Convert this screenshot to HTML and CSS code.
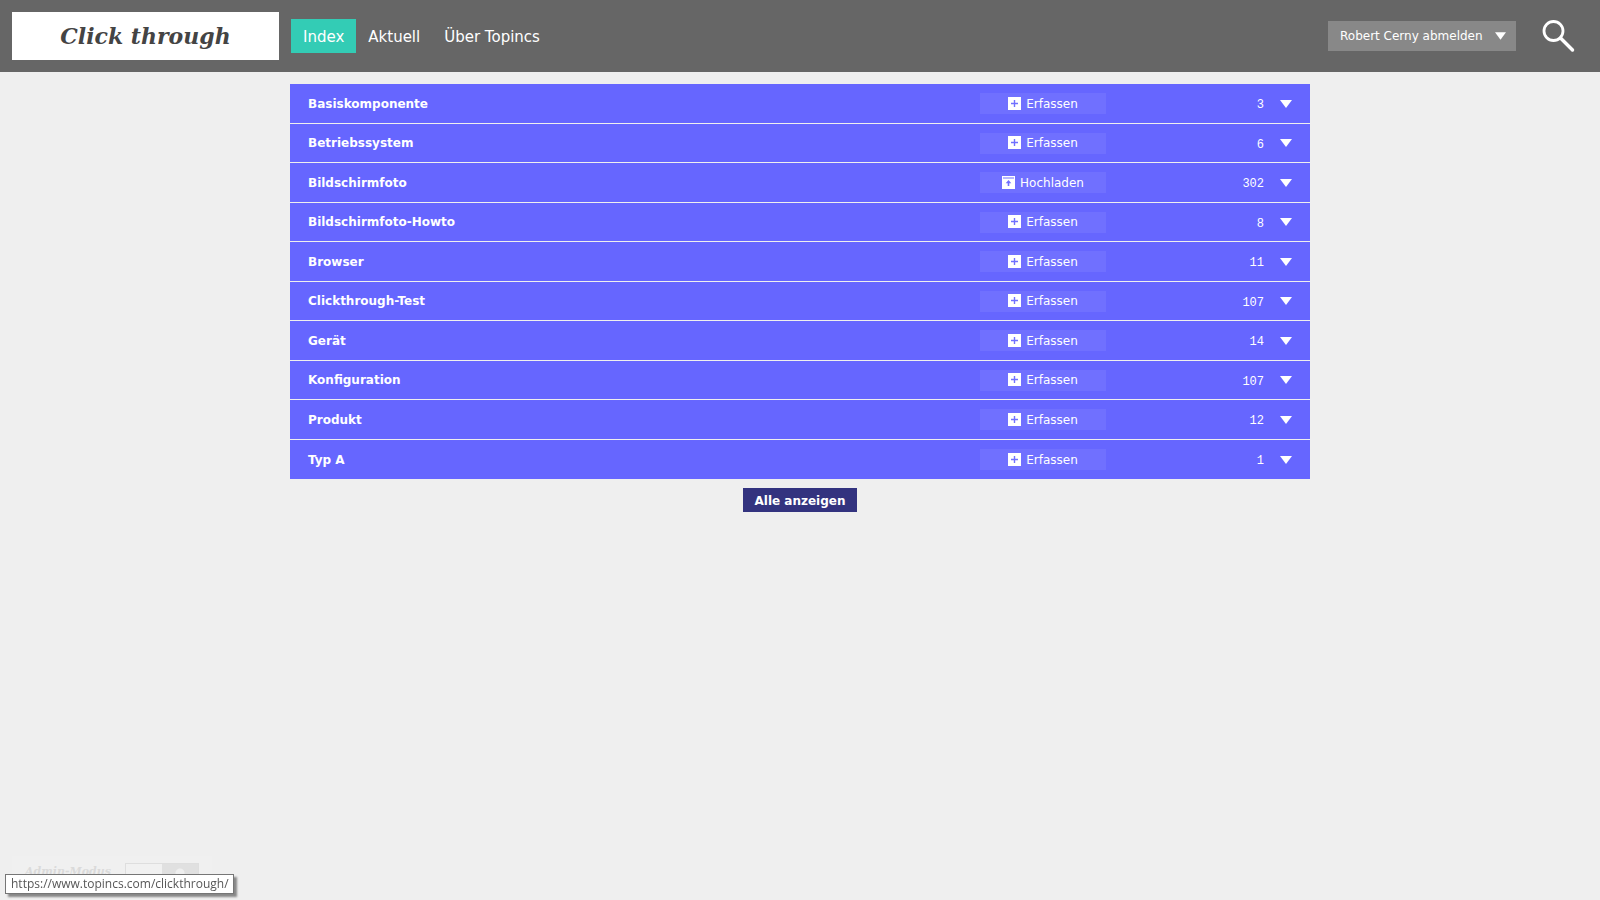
FILE: index.html
```html
<!DOCTYPE html>
<html lang="de">
<head>
<meta charset="utf-8">
<title>Click through</title>
<link rel="stylesheet" href="styles.css">
</head>
<body>
<svg class="sprites" aria-hidden="true">
  <symbol id="plus" viewBox="0 0 13 13"><path fill="#fff" fill-rule="evenodd" d="M0 0h13v13H0zM5.800 3v2.800H3v1.400h2.800V10h1.400V7.200H10V5.800H7.200V3z"/></symbol>
  <symbol id="upload" viewBox="0 0 13 13"><path fill="#fff" fill-rule="evenodd" d="M0 0h13v13H0zM1 1.500v1h11v-1zM6.500 4L3.700 7.200h2V10h1.600V7.200h2z"/></symbol>
  <symbol id="down" viewBox="0 0 12 8"><path fill="#fff" d="M0 0h12L6 8z"/></symbol>
</svg>
<header class="topbar">
  <a class="logo" href="#">Click through</a>
  <nav class="nav">
    <a class="nav-link active" href="#">Index</a>
    <a class="nav-link" href="#">Aktuell</a>
    <a class="nav-link" href="#">Über Topincs</a>
  </nav>
  <div class="account">
    <select class="account-select" aria-label="Konto"><option>Robert Cerny abmelden</option></select>
    <svg class="account-arrow" aria-hidden="true"><use href="#down"/></svg>
  </div>
  <button class="search" aria-label="Suchen">
    <svg width="34" height="34" viewBox="0 0 34 34" fill="none" stroke="#fff"><circle cx="11.500" cy="12" r="9.500" stroke-width="2.800"/><path d="M18.500 19L30.500 31" stroke-width="3.500" stroke-linecap="round"/></svg>
  </button>
</header>
<main class="content">
  <ul class="types">
    <li class="type"><a class="type-name" href="#">Basiskomponente</a><button class="action"><svg class="icon"><use href="#plus"/></svg>Erfassen</button><span class="count">3</span><button class="expand" aria-label="Basiskomponente aufklappen"><svg class="arrow"><use href="#down"/></svg></button></li>
    <li class="type"><a class="type-name" href="#">Betriebssystem</a><button class="action"><svg class="icon"><use href="#plus"/></svg>Erfassen</button><span class="count">6</span><button class="expand" aria-label="Betriebssystem aufklappen"><svg class="arrow"><use href="#down"/></svg></button></li>
    <li class="type"><a class="type-name" href="#">Bildschirmfoto</a><button class="action"><svg class="icon"><use href="#upload"/></svg>Hochladen</button><span class="count">302</span><button class="expand" aria-label="Bildschirmfoto aufklappen"><svg class="arrow"><use href="#down"/></svg></button></li>
    <li class="type"><a class="type-name" href="#">Bildschirmfoto-Howto</a><button class="action"><svg class="icon"><use href="#plus"/></svg>Erfassen</button><span class="count">8</span><button class="expand" aria-label="Bildschirmfoto-Howto aufklappen"><svg class="arrow"><use href="#down"/></svg></button></li>
    <li class="type"><a class="type-name" href="#">Browser</a><button class="action"><svg class="icon"><use href="#plus"/></svg>Erfassen</button><span class="count">11</span><button class="expand" aria-label="Browser aufklappen"><svg class="arrow"><use href="#down"/></svg></button></li>
    <li class="type"><a class="type-name" href="#">Clickthrough-Test</a><button class="action"><svg class="icon"><use href="#plus"/></svg>Erfassen</button><span class="count">107</span><button class="expand" aria-label="Clickthrough-Test aufklappen"><svg class="arrow"><use href="#down"/></svg></button></li>
    <li class="type"><a class="type-name" href="#">Gerät</a><button class="action"><svg class="icon"><use href="#plus"/></svg>Erfassen</button><span class="count">14</span><button class="expand" aria-label="Gerät aufklappen"><svg class="arrow"><use href="#down"/></svg></button></li>
    <li class="type"><a class="type-name" href="#">Konfiguration</a><button class="action"><svg class="icon"><use href="#plus"/></svg>Erfassen</button><span class="count">107</span><button class="expand" aria-label="Konfiguration aufklappen"><svg class="arrow"><use href="#down"/></svg></button></li>
    <li class="type"><a class="type-name" href="#">Produkt</a><button class="action"><svg class="icon"><use href="#plus"/></svg>Erfassen</button><span class="count">12</span><button class="expand" aria-label="Produkt aufklappen"><svg class="arrow"><use href="#down"/></svg></button></li>
    <li class="type"><a class="type-name" href="#">Typ A</a><button class="action"><svg class="icon"><use href="#plus"/></svg>Erfassen</button><span class="count">1</span><button class="expand" aria-label="Typ A aufklappen"><svg class="arrow"><use href="#down"/></svg></button></li>
  </ul>
  <button class="show-all">Alle anzeigen</button>
</main>
<div class="admin">
  <label class="admin-label" for="admin">Admin-Modus</label>
  <input class="admin-toggle" id="admin" type="checkbox">
</div>
<div class="tooltip" role="tooltip">https://www.topincs.com/clickthrough/</div>
</body>
</html>
```
FILE: styles.css
```css
* { box-sizing: border-box; }
body {
  margin: 0;
  min-height: 100vh;
  background: #efefef;
  color: #fff;
  font: 12px/20px "DejaVu Sans", Verdana, sans-serif;
}
a { color: inherit; text-decoration: none; }
button, select { font: inherit; color: inherit; border: 0; padding: 0; border-radius: 0; cursor: pointer; }
.sprites { position: absolute; width: 0; height: 0; }

.topbar {
  display: flex;
  align-items: center;
  height: 72px;
  padding: 0 24px 0 12px;
  background: #666;
}
.logo {
  width: 267px;
  height: 48px;
  margin-right: 12px;
  background: #fff;
  color: #444;
  font: italic bold 22px/48px Georgia, "DejaVu Serif", serif;
  text-align: center;
}
.nav { display: flex; flex: 1; }
.nav-link { padding: 2px 12px 0; font-size: 15px; line-height: 32px; }
.nav-link.active { background: #33ccb5; }
.account { position: relative; width: 188px; }
.account-select {
  appearance: none;
  display: block;
  width: 100%;
  height: 30px;
  padding: 0 32px 0 12px;
  background: #888;
}
.account-arrow { position: absolute; right: 10px; top: 11px; width: 11px; height: 8px; pointer-events: none; }
.search { display: flex; margin-left: 26px; background: none; }

.content {
  display: flex;
  flex-direction: column;
  align-items: center;
  gap: 9px;
  padding: 12px 24px;
}
.types { width: 100%; max-width: 1020px; margin: 0; padding: 0; list-style: none; }
.type {
  display: flex;
  align-items: center;
  height: 40px;
  padding: 0 18px;
  background: #66f;
  border-bottom: 1px solid #efefef;
}
.type:nth-child(even) { height: 39px; }
.type:last-child { border-bottom: 0; }
.type-name { flex: 1; font-weight: bold; }
.action {
  display: flex;
  align-items: center;
  justify-content: center;
  gap: 5px;
  width: 126px;
  height: 21px;
  background: #7070ff;
}
.icon { width: 13px; height: 13px; margin-bottom: 1px; }
.count {
  width: 158px;
  padding-top: 3px;
  text-align: right;
  font: 12px/20px "Liberation Mono", monospace;
}
.expand { display: flex; margin-left: 16px; background: none; }
.arrow { width: 12px; height: 8px; }
.show-all {
  padding: 2px 12px 0;
  background: #33337f;
  font-weight: bold;
  line-height: 22px;
}

.admin {
  position: fixed;
  left: 12px;
  bottom: 0;
  display: flex;
  align-items: center;
  gap: 14px;
  height: 44px;
  padding: 0 13px 10px;
  background: #f0f0f0;
}
.admin-label { padding-bottom: 2px; color: #dadada; font: italic bold 11px/18px Georgia, "DejaVu Serif", serif; }
.admin-toggle {
  appearance: none;
  width: 74px;
  height: 20px;
  margin: 0;
  border: 1px solid #dedede;
  background: radial-gradient(circle at 54px 9px, #efefef 4px, transparent 5px), linear-gradient(90deg, #f1f1f1 50%, #e0e0e0 50%);
}
.tooltip {
  position: fixed;
  left: 5px;
  bottom: 6px;
  padding: 0 4px 0 5px;
  border: 1px solid #767676;
  background: #fff;
  box-shadow: 3px 3px 2px #888;
  color: #575757;
  font: 12px/18px "Open Sans", sans-serif;
}
```
